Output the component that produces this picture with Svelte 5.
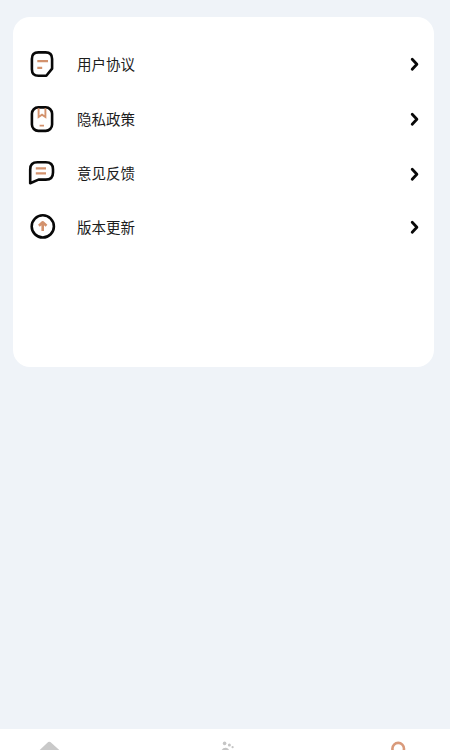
<script lang="ts">
  type IconName = "agreement" | "privacy" | "feedback" | "update";

  const menuItems: { icon: IconName; label: string }[] = [
    { icon: "agreement", label: "用户协议" },
    { icon: "privacy", label: "隐私政策" },
    { icon: "feedback", label: "意见反馈" },
    { icon: "update", label: "版本更新" },
  ];
</script>

<div class="page">
  <main class="card">
    {#each menuItems as item (item.icon)}
      <button class="row">
        <svg class="icon" viewBox="0 0 28 28" aria-hidden="true">
          {#if item.icon === "agreement"}
            <path class="outline" d="M10.4 2.4H17.6Q24.1 2.4 24.1 8.9V18.6L18.3 25.8H10.4Q3.9 25.8 3.9 19.3V8.9Q3.9 2.4 10.4 2.4Z" />
            <path class="accent" d="M9.3 11.1H20M9.3 17.9H14.2" />
          {:else if item.icon === "privacy"}
            <rect class="outline" x="3.9" y="2.4" width="20.2" height="23.5" rx="6.4" />
            <path class="accent thin" d="M10.6 3.3V12L14 9.7L17.4 12V3.3M11.6 20.6H16" />
          {:else if item.icon === "feedback"}
            <path class="outline" d="M2.2 23.2V9.4Q2.2 2.2 9.4 2.2H17.8Q25 2.2 25 9.2V12.4Q25 19.6 17.8 19.6H10.5Z" />
            <path class="accent" d="M7.8 8.4H18M7.8 13.4H18" />
          {:else}
            <circle class="outline" cx="14.8" cy="13.4" r="11.1" />
            <path class="arrow" d="M10.9 12.8L14.7 9.3L18.5 12.8M14.7 10V18" />
          {/if}
        </svg>
        <span class="label">{item.label}</span>
        <svg class="chevron" viewBox="0 0 10 16" aria-hidden="true">
          <path d="M2.2 3.2L6.9 8.2L2.2 13.2" />
        </svg>
      </button>
    {/each}
  </main>

  <nav class="tab-bar">
    <svg viewBox="0 0 24 24" aria-label="home">
      <path fill="#c9c9c9" d="M11.2 1.1Q12.3.2 13.4 1.1L22.5 9.2V22H2.5V9.2Z" />
    </svg>
    <svg class="discover" viewBox="0 0 24 24" aria-label="discover">
      <g fill="#c5c5c5">
        <circle cx="8.6" cy="2.4" r="1.8" />
        <circle cx="13.4" cy="4" r="1.5" />
        <circle cx="16.6" cy="6.2" r="1.1" />
        <path d="M5.7 9Q7 6.5 10 6.7Q12.5 7 13.3 9.5V20H5.7Z" />
      </g>
    </svg>
    <svg viewBox="0 0 24 24" aria-label="mine">
      <circle cx="12.2" cy="7.7" r="5.8" fill="none" stroke="#d99a7b" stroke-width="2.6" />
    </svg>
  </nav>
</div>

<style>
  :global(body) {
    margin: 0;
    overflow: hidden;
  }

  .page {
    display: flex;
    flex-direction: column;
    justify-content: space-between;
    box-sizing: border-box;
    height: 100vh;
    padding-top: 16.5px;
    overflow: hidden;
    background: #eff3f8;
    font-family: "Noto Sans CJK SC", sans-serif;
  }

  .card {
    display: grid;
    grid-template-rows: 55px 55px 54px 53px;
    box-sizing: border-box;
    height: 350px;
    margin: 0 16px 0 12.5px;
    padding: 20px 14px 0 15.5px;
    border-radius: 17px;
    background: #fff;
  }

  .row {
    display: flex;
    align-items: center;
    padding: 0;
    border: none;
    background: transparent;
    color: #1c1c1c;
    font: inherit;
    text-align: left;
    cursor: pointer;
  }

  .icon {
    width: 28px;
    height: 28px;
    flex-shrink: 0;
  }

  .outline {
    fill: none;
    stroke: #080808;
    stroke-width: 2.6;
    stroke-linejoin: round;
  }

  .accent {
    fill: none;
    stroke: #d3926d;
    stroke-width: 2.3;
  }

  .thin {
    stroke-width: 1.9;
  }

  .arrow {
    fill: none;
    stroke: #d3926d;
    stroke-width: 2.6;
    stroke-linejoin: round;
  }

  .label {
    flex: 1;
    margin-left: 21px;
    padding-bottom: 1px;
    font-size: 14.5px;
    line-height: 22px;
  }

  .chevron {
    width: 10px;
    height: 16px;
  }

  .chevron path {
    fill: none;
    stroke: #080808;
    stroke-width: 2.8;
    stroke-linecap: round;
    stroke-linejoin: round;
  }

  .tab-bar {
    display: flex;
    justify-content: space-between;
    box-sizing: border-box;
    height: 21.5px;
    padding: 12.5px 40px 0 37px;
    overflow: hidden;
    background: #fff;
  }

  .tab-bar svg {
    width: 24px;
    height: 24px;
    flex-shrink: 0;
  }

  .tab-bar .discover {
    margin-left: 9px;
  }
</style>
